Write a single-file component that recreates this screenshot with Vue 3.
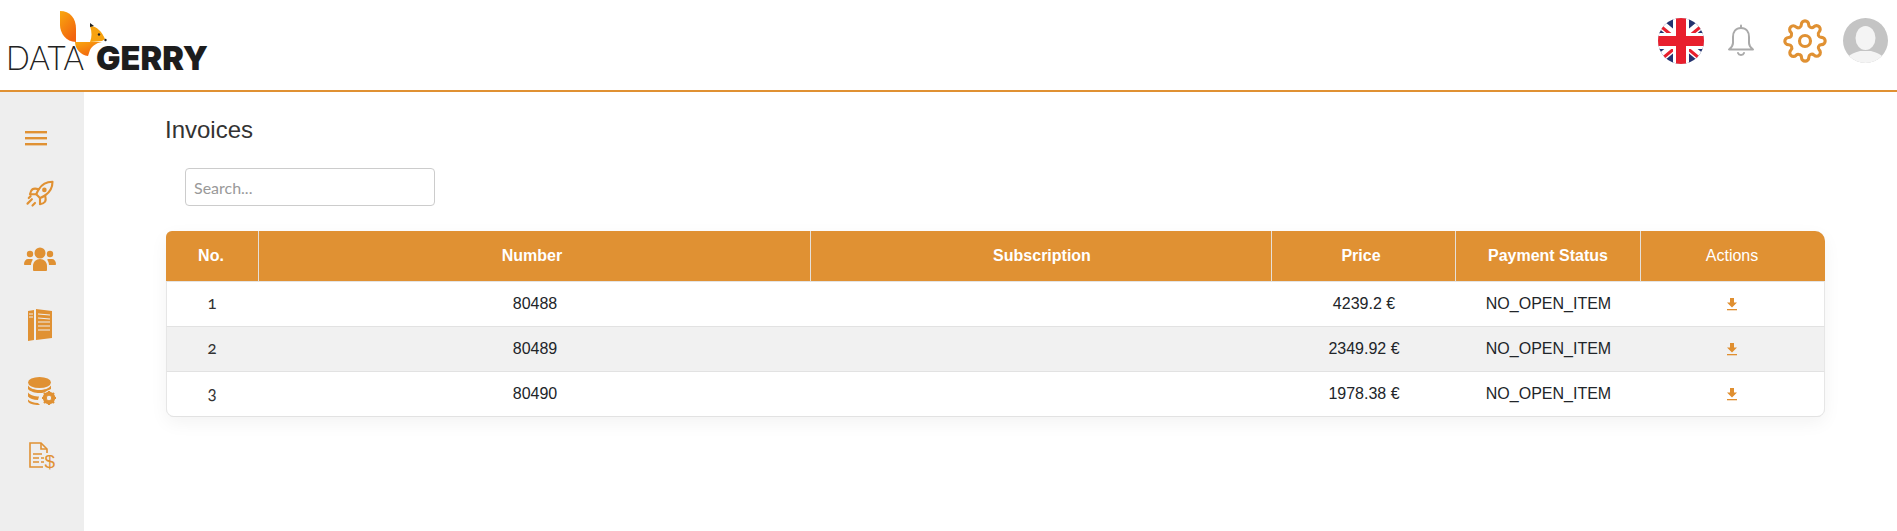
<script setup>
const columns = [
  { label: 'No.', width: 93, shift: 'left' },
  { label: 'Number', width: 552, shift: 'left-more' },
  { label: 'Subscription', width: 461, shift: 'right' },
  { label: 'Price', width: 184, shift: 'left-more' },
  { label: 'Payment Status', width: 185 },
  { label: 'Actions', width: 184, plain: true, shift: 'left' },
]

const invoices = [
  { no: 1, number: '80488', subscription: '', price: '4239.2 €', status: 'NO_OPEN_ITEM' },
  { no: 2, number: '80489', subscription: '', price: '2349.92 €', status: 'NO_OPEN_ITEM' },
  { no: 3, number: '80490', subscription: '', price: '1978.38 €', status: 'NO_OPEN_ITEM' },
]
</script>

<template>
  <div class="page">
    <header class="topbar">
      <svg class="logo" width="215" height="90" viewBox="0 0 215 90">
        <defs>
          <linearGradient id="fur" x1="0" y1="0" x2="0.6" y2="1">
            <stop offset="0" stop-color="#f9a80f" />
            <stop offset="1" stop-color="#f2640f" />
          </linearGradient>
        </defs>
        <path d="M60 11c10 0 16 7 16 18v13C66 42 60 33 60 25z" fill="url(#fur)" />
        <path d="M75 42h27c-6 1-10 4-12 8l-2 6c-7-1-13-7-13-14z" fill="url(#fur)" />
        <path d="M90 26c7 0 12 6 15 13l-3 2-12 1c2-5 2-10 0-16z" fill="#f7a20f" />
        <path d="M90 23l4 3-4 1z" fill="#222" />
        <circle cx="99" cy="34.500" r="1.200" fill="#222" />
        <circle cx="105.500" cy="40" r="1.200" fill="#222" />
        <text class="logo-thin" x="6" y="70" textLength="78" lengthAdjust="spacingAndGlyphs">DATA</text>
        <text class="logo-bold" x="96" y="70" textLength="112" lengthAdjust="spacingAndGlyphs">GERRY</text>
      </svg>

      <div class="tools">
        <svg class="flag" width="46" height="46" viewBox="0 0 46 46">
          <defs>
            <clipPath id="flagClip"><circle cx="23" cy="23" r="23" /></clipPath>
          </defs>
          <g clip-path="url(#flagClip)">
            <rect width="46" height="46" fill="#24336f" />
            <path d="M0 4L46 42M46 4L0 42" stroke="#fff" stroke-width="9" />
            <path d="M0 6L46 44M46 6L0 44" stroke="#e81f2d" stroke-width="3" />
            <rect x="15" width="16" height="46" fill="#fff" />
            <rect y="15" width="46" height="16" fill="#fff" />
            <rect x="18" width="10" height="46" fill="#e81f2d" />
            <rect y="18" width="46" height="10" fill="#e81f2d" />
          </g>
        </svg>
        <svg class="bell" width="28" height="34" viewBox="0 0 28 34" fill="none" stroke="#aaa" stroke-width="2" stroke-linecap="round" stroke-linejoin="round">
          <path d="M14 4c-5.500 0-8 4-8 9v6c0 2.500-1.500 4.500-4 6.500h24c-2.500-2-4-4-4-6.500v-6c0-5-2.500-9-8-9z" />
          <path d="M14 1.500V4" />
          <path d="M11 29c.8 2.500 5.200 2.500 6 0" />
        </svg>
        <svg class="gear" width="44" height="44" viewBox="0 0 24 24" fill="none" stroke="#e09133" stroke-width="1.700" stroke-linecap="round" stroke-linejoin="round">
          <circle cx="12" cy="12" r="3" />
          <path d="M19.400 15a1.650 1.650 0 0 0 .33 1.820l.06.06a2 2 0 0 1 0 2.830 2 2 0 0 1-2.830 0l-.06-.06a1.650 1.650 0 0 0-1.820-.33 1.650 1.650 0 0 0-1 1.510V21a2 2 0 0 1-2 2 2 2 0 0 1-2-2v-.09A1.650 1.650 0 0 0 9 19.400a1.650 1.650 0 0 0-1.820.33l-.06.06a2 2 0 0 1-2.830 0 2 2 0 0 1 0-2.830l.06-.06a1.650 1.650 0 0 0 .33-1.820 1.650 1.650 0 0 0-1.510-1H3a2 2 0 0 1-2-2 2 2 0 0 1 2-2h.09A1.650 1.650 0 0 0 4.600 9a1.650 1.650 0 0 0-.33-1.820l-.06-.06a2 2 0 0 1 0-2.830 2 2 0 0 1 2.830 0l.06.06a1.650 1.650 0 0 0 1.820.33H9a1.650 1.650 0 0 0 1-1.510V3a2 2 0 0 1 2-2 2 2 0 0 1 2 2v.09a1.650 1.650 0 0 0 1 1.510 1.650 1.650 0 0 0 1.820-.33l.06-.06a2 2 0 0 1 2.830 0 2 2 0 0 1 0 2.830l-.06.06a1.650 1.650 0 0 0-.33 1.820V9a1.650 1.650 0 0 0 1.510 1H21a2 2 0 0 1 2 2 2 2 0 0 1-2 2h-.09a1.650 1.650 0 0 0-1.510 1z" />
        </svg>
        <svg class="avatar" width="45" height="45" viewBox="0 0 45 45">
          <defs>
            <clipPath id="avatarClip"><circle cx="22.500" cy="22.500" r="22.500" /></clipPath>
          </defs>
          <g clip-path="url(#avatarClip)">
            <rect width="45" height="45" fill="#c4c4c4" />
            <ellipse cx="22.500" cy="20" rx="10" ry="12" fill="#f4f4f4" />
            <path d="M2 45c1-8 9-10 15-12h11c6 2 14 4 15 12z" fill="#f4f4f4" />
          </g>
        </svg>
      </div>
    </header>

    <div class="body">
      <nav class="sidebar">
        <div class="item menu">
          <svg width="24" height="16" viewBox="0 0 24 16" fill="#e09133">
            <rect x="1" y="1" width="22" height="2.400" />
            <rect x="1" y="7" width="22" height="2.400" />
            <rect x="1" y="13" width="22" height="2.400" />
          </svg>
        </div>
        <div class="item">
          <svg width="30" height="30" viewBox="0 -1 24 24" fill="none" stroke="#e09133" stroke-width="1.700" stroke-linecap="round" stroke-linejoin="round">
            <path d="M12 15l-3-3a22 22 0 0 1 2-3.950A12.880 12.880 0 0 1 22 2c0 2.720-.78 7.500-6 11a22.350 22.350 0 0 1-4 2z" />
            <path d="M9 12H4s.55-3.030 2-4c1.620-1.080 5 0 5 0" />
            <path d="M12 15v5s3.030-.55 4-2c1.080-1.620 0-5 0-5" />
            <circle cx="15.500" cy="8.500" r="1" fill="#e09133" />
            <path d="M3 15l1.500-1.500M2 19.500l3.500-3.500M6 21l2-2" />
          </svg>
        </div>
        <div class="item">
          <svg width="32" height="24" viewBox="0 0 32 24" fill="#e09133">
            <circle cx="16" cy="6" r="5.500" />
            <circle cx="6" cy="7" r="3.200" />
            <circle cx="26" cy="7" r="3.200" />
            <path d="M9 23v-4c0-4 3-7 7-7s7 3 7 7v4c0 .5-.5 1-1 1H10c-.5 0-1-.5-1-1z" />
            <path d="M7 18H1c-.6 0-1-.4-1-1 0-3 2-5 4-5h3.500c.5 0 1 .2 1.400.5C8 14 7 16 7 18z" />
            <path d="M25 18h6c.6 0 1-.4 1-1 0-3-2-5-4-5h-3.500c-.5 0-1 .2-1.400.5C24 14 25 16 25 18z" />
          </svg>
        </div>
        <div class="item">
          <svg width="24" height="32" viewBox="0 0 24 32">
            <path d="M0 2l6-1v30l-6 1z" fill="#e09133" />
            <path d="M8 0l16 2v27L8 31z" fill="#e09133" />
            <path d="M1 5h4M1 8h4M10 5l12 1M10 9l12 1M10 13h12M10 17h12M10 21h12" stroke="#eee" stroke-width="1.100" />
          </svg>
        </div>
        <div class="item shifted">
          <svg width="28" height="30" viewBox="0 -1 28 30" fill="#e09133">
            <ellipse cx="11.500" cy="5.500" rx="11.500" ry="5.500" />
            <path d="M0 8.500c2 3 7 4.500 11.500 4.500S21 11.500 23 8.500v3.500c-2 1-3.500 1.600-5 2.500-2 1-3 1.500-6.500 1.500C7 16 2 14.500 0 12z" />
            <path d="M0 15.500c2 2.800 7 4 11 4l-1 3.500c-5 0-8-1.500-10-3.500z" />
            <path d="M0 22.500c2 2 6 3.500 10 3.500l2 2C7 28.200 0 27 0 24z" />
            <circle cx="21" cy="21" r="4.700" fill="none" stroke="#e09133" stroke-width="3" />
            <path d="M21 14v14M14 21h14M16 16l10 10M26 16L16 26" stroke="#e09133" stroke-width="2.200" />
            <circle cx="21" cy="21" r="2.200" fill="#eee" />
          </svg>
        </div>
        <div class="item shifted">
          <svg width="26" height="30" viewBox="0 0 26 30" fill="none" stroke="#e09133" stroke-width="1.600">
            <path d="M18 11V7l-6-6H1v24h13" />
            <path d="M12 1v6h6" />
            <path d="M4 12h9M4 16h6M4 20h6M12 16h3M12 20h3" stroke-width="1.500" />
            <text class="dollar" x="15.500" y="26">$</text>
          </svg>
        </div>
      </nav>

      <main class="content">
        <h1 class="title">Invoices</h1>
        <input class="search" type="text" placeholder="Search..." />

        <div class="table-wrap">
          <table>
            <colgroup>
              <col v-for="col in columns" :key="col.label" :style="{ width: col.width + 'px' }" />
            </colgroup>
            <thead>
              <tr>
                <th v-for="col in columns" :key="col.label" :class="[col.shift, { plain: col.plain }]">{{ col.label }}</th>
              </tr>
            </thead>
            <tbody>
              <tr v-for="row in invoices" :key="row.no">
                <td class="no">{{ row.no }}</td>
                <td>{{ row.number }}</td>
                <td>{{ row.subscription }}</td>
                <td>{{ row.price }}</td>
                <td>{{ row.status }}</td>
                <td class="action">
                  <svg class="download" width="12" height="13" viewBox="0 0 12 13" fill="#e08f30">
                    <path d="M4 0h4v4.500h3L6 9.500 1 4.500h3z" />
                    <rect x="1" y="11" width="10" height="1.300" />
                  </svg>
                </td>
              </tr>
            </tbody>
          </table>
        </div>
      </main>
    </div>
  </div>
</template>

<style>
body {
  overflow: hidden;
}
</style>

<style scoped>
.page {
  display: flex;
  flex-direction: column;
  min-height: 100vh;
  font-family: "Liberation Sans", Arial, sans-serif;
  color: #212529;
  background: #fff;
}
.topbar {
  display: flex;
  align-items: flex-start;
  justify-content: space-between;
  height: 90px;
  border-bottom: 2px solid #e09133;
}
.logo {
  display: block;
}
.logo-thin {
  font-family: Lato, sans-serif;
  font-weight: 300;
  font-size: 33px;
  fill: #222;
}
.logo-bold {
  font-family: Inter, sans-serif;
  font-weight: 900;
  font-size: 33px;
  fill: #1d1d1d;
}
.tools {
  display: flex;
  align-items: flex-start;
  padding-right: 9px;
}
.flag {
  margin-top: 18px;
}
.bell {
  margin: 24px 0 0 23px;
}
.gear {
  margin: 19px 0 0 28px;
}
.avatar {
  margin: 18px 0 0 16px;
}
.body {
  display: flex;
  flex: 1;
}
.sidebar {
  display: flex;
  flex-direction: column;
  width: 84px;
  flex-shrink: 0;
  padding-top: 24px;
  background: #eee;
  box-sizing: border-box;
}
.item {
  display: flex;
  align-items: center;
  justify-content: center;
  width: 80px;
  height: 66px;
}
.item.menu {
  width: 72px;
  height: 44px;
}
.item.shifted {
  width: 84px;
}
.dollar {
  font-family: "Liberation Sans", sans-serif;
  font-size: 19px;
  fill: #e09133;
  stroke: none;
}
.content {
  flex: 1;
  padding: 20px 72px 0 82px;
  min-width: 0;
}
.title {
  margin: 0 0 20px -1px;
  font-size: 24px;
  font-weight: 400;
  line-height: 36px;
  color: #333;
}
.search {
  display: block;
  width: 250px;
  height: 38px;
  margin-left: 19px;
  padding: 0 8px;
  box-sizing: border-box;
  border: 1px solid #ccc;
  border-radius: 4px;
  font-family: Lato, sans-serif;
  font-size: 16px;
  outline: none;
}
.search::placeholder {
  color: #999;
}
.table-wrap {
  margin-top: 25px;
  border-radius: 6px 10px 8px 8px;
  overflow: hidden;
  box-shadow: 0 0 0 1px #e6e6e6 inset, 0 6px 18px rgba(0, 0, 0, 0.05);
}
table {
  width: 100%;
  table-layout: fixed;
  border-collapse: separate;
  border-spacing: 0;
}
th {
  height: 50px;
  padding: 0;
  background: #e09133;
  color: #fff;
  font-size: 16px;
  font-weight: 700;
  text-align: center;
  border-right: 1px solid #e6e0d8;
  border-bottom: 1px solid #e4e4e4;
}
th:last-child {
  border-right: none;
}
th.plain {
  font-weight: 400;
}
th.left {
  padding-right: 2px;
}
th.left-more {
  padding-right: 5px;
}
th.right {
  padding-left: 2px;
}
td {
  height: 44px;
  padding: 0;
  font-size: 16px;
  text-align: center;
  color: #212529;
  border-bottom: 1px solid #e2e2e2;
}
td:first-child {
  border-left: 1px solid #e6e6e6;
}
td:last-child {
  border-right: 1px solid #e6e6e6;
}
tbody tr:nth-child(even) td {
  background: #f1f1f1;
}
td.no {
  font-family: Lato, sans-serif;
  font-size: 17px;
  font-weight: 400;
  color: #333;
  font-variant-numeric: oldstyle-nums;
  padding-right: 2px;
  padding-bottom: 3px;
  box-sizing: border-box;
}
.download {
  display: block;
  margin: 0 auto;
}
td.action {
  padding-right: 2px;
}
</style>
